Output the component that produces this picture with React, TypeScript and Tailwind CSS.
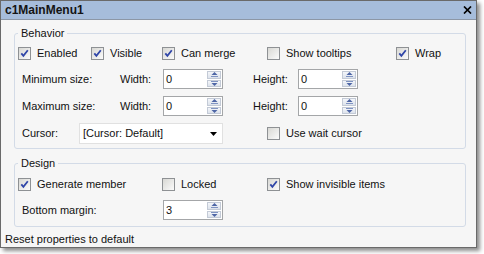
import React from "react";

type CheckProps = {
  label: string;
  checked?: boolean;
  className?: string;
};

const Check = ({ label, checked = false, className = "" }: CheckProps) => {
  return (
    <label className={`flex items-center gap-[6px] ${className}`}>
      <span className="flex h-[13px] w-[13px] shrink-0 items-center justify-center border border-[#8e9194] bg-linear-to-br from-[#d8d8d4] to-[#fbfbfb]">
        {checked && (
          <svg width="9" height="9" viewBox="0 0 9 9">
            <polyline
              points="1.3,4.3 3.4,6.8 7.8,1.2"
              fill="none"
              stroke="#3046a8"
              strokeWidth="1.8"
            />
          </svg>
        )}
      </span>
      <span>{label}</span>
    </label>
  );
};

const Spin = ({ value }: { value: string }) => {
  return (
    <div className="flex h-[20px] w-[60px] border border-[#a4a6a8] bg-white">
      <span className="flex-1 pl-[2px] leading-[18px]">{value}</span>
      <div className="flex w-[16px] flex-col gap-[1px] p-[1px]">
        <div className="flex flex-1 items-center justify-center border border-[#c3cad6] bg-linear-to-b from-[#f4f6fa] to-[#dde3ec]">
          <svg width="7" height="5" viewBox="0 0 7 5">
            <polygon points="0.5,3 3.5,0 6.5,3" fill="#4e66a6" />
            <rect x="0" y="4" width="7" height="1" fill="#7f93c2" />
          </svg>
        </div>
        <div className="flex flex-1 items-center justify-center border border-[#c3cad6] bg-linear-to-b from-[#f4f6fa] to-[#dde3ec]">
          <svg width="7" height="5" viewBox="0 0 7 5">
            <rect x="0" y="0" width="7" height="1" fill="#7f93c2" />
            <polygon points="0.5,2 3.5,5 6.5,2" fill="#4e66a6" />
          </svg>
        </div>
      </div>
    </div>
  );
};

const SizeRow = ({ label }: { label: string }) => {
  return (
    <div className="flex h-[20px] items-center">
      <span className="w-[102px] pl-[4px]">{label}</span>
      <span className="w-[43px]">Width:</span>
      <Spin value="0" />
      <span className="w-[30px]" />
      <span className="w-[45px]">Height:</span>
      <Spin value="0" />
    </div>
  );
};

export default function App() {
  return (
    <div className="h-[254px] w-[484px] bg-white font-['Liberation_Sans',Arial,sans-serif] text-[11px] leading-[13px] text-[#111]">
      <div className="flex h-[248px] w-[477px] flex-col border border-[#6a6a6a] bg-[#f6f6f6] shadow-[3px_3px_4px_rgba(0,0,0,0.45)]">
        <div className="flex h-[19px] shrink-0 items-center justify-between border-b border-[#8c97a6] bg-[#a6bddb] pl-[4px] pr-[4px]">
          <span className="text-[12px] font-bold text-[#141414]">c1MainMenu1</span>
          <svg width="9" height="8" viewBox="0 0 9 8">
            <path d="M1 0.5 L8 7.5 M8 0.5 L1 7.5" stroke="#000" strokeWidth="1.7" />
          </svg>
        </div>

        <fieldset className="ml-[13px] mt-[7px] w-[452px] rounded-[3px] border border-[#d3dbe7] px-[3px] pb-[4px] pt-[3px]">
          <legend className="px-[3px] leading-[13px]">Behavior</legend>
          <div className="flex h-[20px] items-center">
            <Check label="Enabled" checked className="w-[73px]" />
            <Check label="Visible" checked className="w-[71px]" />
            <Check label="Can merge" checked className="w-[105px]" />
            <Check label="Show tooltips" className="w-[129px]" />
            <Check label="Wrap" checked />
          </div>
          <div className="mt-[6px]">
            <SizeRow label="Minimum size:" />
          </div>
          <div className="mt-[7px]">
            <SizeRow label="Maximum size:" />
          </div>
          <div className="mt-[7px] flex h-[21px] items-center">
            <span className="w-[61px] pl-[4px]">Cursor:</span>
            <div className="flex h-[21px] w-[144px] items-center justify-between border border-[#e1e1e1] bg-white pl-[3px] pr-[5px]">
              <span>[Cursor: Default]</span>
              <svg width="7" height="4" viewBox="0 0 7 4">
                <polygon points="0,0 7,0 3.5,4" fill="#000" />
              </svg>
            </div>
            <span className="w-[44px]" />
            <Check label="Use wait cursor" />
          </div>
        </fieldset>

        <fieldset className="ml-[13px] mt-[8px] w-[452px] rounded-[3px] border border-[#d3dbe7] px-[3px] pb-[6px] pt-[4px]">
          <legend className="px-[3px] leading-[13px]">Design</legend>
          <div className="flex h-[20px] items-center">
            <Check label="Generate member" checked className="w-[144px]" />
            <Check label="Locked" className="w-[105px]" />
            <Check label="Show invisible items" checked />
          </div>
          <div className="mt-[6px] flex h-[20px] items-center">
            <span className="w-[145px] pl-[4px]">Bottom margin:</span>
            <Spin value="3" />
          </div>
        </fieldset>

        <p className="mt-[6px] pl-[4px]">Reset properties to default</p>
      </div>
    </div>
  );
}
